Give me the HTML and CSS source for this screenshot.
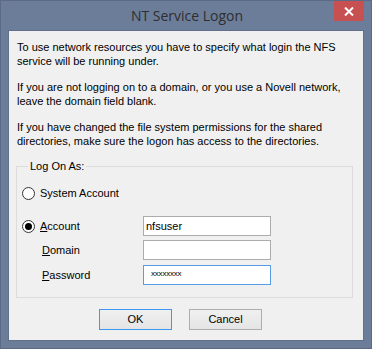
FILE: index.html
```html
<!DOCTYPE html>
<html lang="en">
<head>
<meta charset="UTF-8">
<title>NT Service Logon</title>
<link rel="stylesheet" href="styles.css">
</head>
<body>
<div class="win">
    <div class="tb">
        <div class="tt">NT Service Logon</div>
        <div class="cls"><svg width="10" height="9" viewBox="0 0 10 9"><path d="M1 0.5L9 8.5M9 0.5L1 8.5" stroke="#fff" stroke-width="2"/></svg></div>
    </div>
    <div class="pn">
        <div class="msg">
            <p>To use network resources you have to specify what login the NFS service will be running under.</p>
            <p>If you are not logging on to a domain, or you use a Novell network, leave the domain field blank.</p>
            <p>If you have changed the file system permissions for the shared directories, make sure the logon has access to the directories.</p>
        </div>
        <fieldset class="grp">
            <legend>Log On As:</legend>
            <div class="row r1"><span class="rd"></span><span>System Account</span></div>
            <div class="row r2"><span class="lbl"><span class="rd on"></span><span><u>A</u>ccount</span></span><span class="fld">nfsuser</span></div>
            <div class="row r3"><span class="lbl sub"><span><u>D</u>omain</span></span><span class="fld"></span></div>
            <div class="row r4"><span class="lbl sub"><span><u>P</u>assword</span></span><span class="fld pw">xxxxxxxx</span></div>
        </fieldset>
        <div class="btns">
            <div class="btn def">OK</div>
            <div class="btn">Cancel</div>
        </div>
    </div>
</div>
</body>
</html>
```

FILE: styles.css
```css
*{margin:0;padding:0;box-sizing:border-box}
body{background:#6b7c99;font-family:'Liberation Sans',Arial,sans-serif;font-size:11px;color:#000}

.win{width:372px;height:349px;background:#6c7d9a;border:1px solid #5b6b87;padding:0 7px 7px}
.tb{position:relative;height:29px}
.tt{text-align:center;font-family:'Open Sans','Noto Sans',sans-serif;font-size:14px;color:#2e2e2e;line-height:29px;padding-left:2px}
.cls{position:absolute;top:0;right:0;width:30px;height:20px;background:#c75050;display:flex;align-items:center;justify-content:center}

.pn{height:311px;background:#f0f0f0;border:1px solid #5f6f8c}
.msg{padding:9px 8px 0}
.msg p{line-height:14px;margin-bottom:12px}
.msg p:last-child{margin-bottom:0}

.grp{margin:12px 10px 0 7px;border:1px solid #dcdcdc;padding:10px 10px 12px 5px}
.grp legend{margin-left:6px;padding:0 2px;line-height:13px}

.row{display:grid;grid-template-columns:121px 128px;align-items:center;height:20px}
.r1{display:flex;gap:5px}
.r2{margin-top:13px}
.r3{margin-top:4px}
.r4{margin-top:5px}
.lbl{display:flex;align-items:center;gap:5px}
.sub{padding-left:20px}

.rd{width:13px;height:13px;border:1px solid #333;border-radius:50%;background:#fff;display:flex;align-items:center;justify-content:center}
.rd.on::after{content:'';width:7px;height:7px;border-radius:50%;background:#000}

.fld{height:20px;border:1px solid #acacac;background:#fff;padding:0 2px;line-height:18px;font-size:11px}
.fld.pw{border-color:#569de5;padding-left:7px;font-size:8px;letter-spacing:-.2px;line-height:16px}

.btns{display:flex;gap:17px;padding-left:90px;margin-top:11px}
.btn{width:73px;height:21px;border:1px solid #adadad;background:linear-gradient(#f0f0f0,#e5e5e5);text-align:center;line-height:19px}
.btn.def{border-color:#3c99f0}
```
